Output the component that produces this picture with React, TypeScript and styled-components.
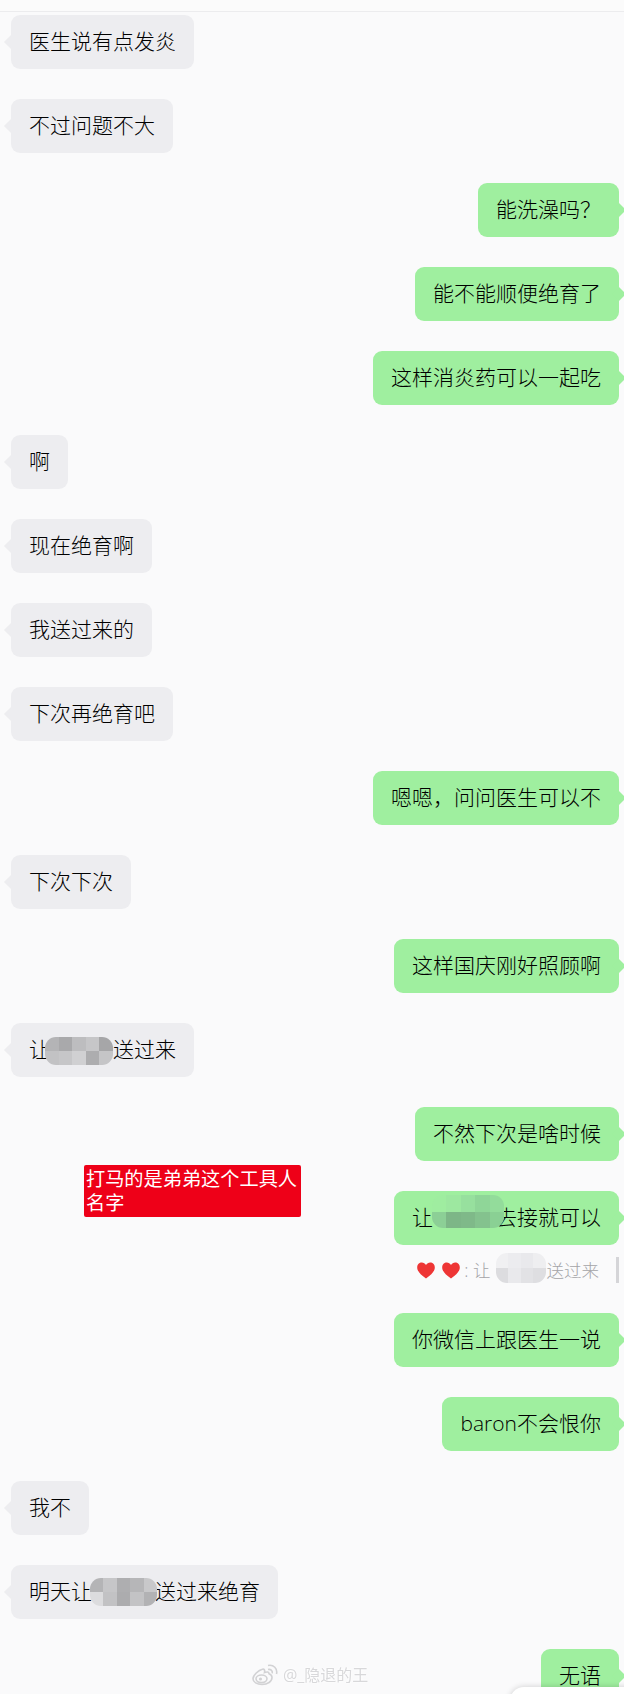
import React from 'react'
import styled, { createGlobalStyle } from 'styled-components'

const GlobalStyle = createGlobalStyle`
  html, body {
    margin: 0;
    padding: 0;
    background: #fafafb;
  }
  * {
    box-sizing: border-box;
  }
`

const Page = styled.div`
  position: relative;
  width: 624px;
  height: 1694px;
  overflow: hidden;
  background: #fafafb;
  font-family: "Open Sans", "Noto Sans CJK SC", sans-serif;
  font-weight: 300;
`

const TopBar = styled.div`
  height: 12px;
  background: #fbfbfb;
  border-bottom: 1px solid #ececee;
`

const Thread = styled.div`
  display: flex;
  flex-direction: column;
  gap: 30px;
  padding: 3px 5px 0 11px;
`

const Row = styled.div<{ $mine?: boolean }>`
  display: flex;
  flex-direction: column;
  align-items: ${({ $mine }) => ($mine ? 'flex-end' : 'flex-start')};
`

const Bubble = styled.div<{ $mine?: boolean }>`
  position: relative;
  height: 54px;
  padding: 0 18px;
  border-radius: 9px;
  background: ${({ $mine }) => ($mine ? '#9fef9f' : '#ededf0')};
  color: #000;
  font-size: 21px;
  line-height: 52px;
  white-space: nowrap;

  &::before {
    content: '';
    position: absolute;
    top: 22px;
    ${({ $mine }) => ($mine ? 'right: -5px;' : 'left: -5px;')}
    width: 10px;
    height: 10px;
    background: inherit;
    transform: rotate(45deg);
  }
`

const MaskSlot = styled.span<{ $w: number }>`
  position: relative;
  display: inline-block;
  width: ${({ $w }) => $w}px;
  height: 1em;
`

const MaskTiles = styled.span<{ $x: number; $y: number; $w: number; $h: number; $cols: number }>`
  position: absolute;
  left: ${({ $x }) => $x}px;
  top: ${({ $y }) => $y}px;
  width: ${({ $w }) => $w}px;
  height: ${({ $h }) => $h}px;
  display: grid;
  grid-template-columns: repeat(${({ $cols }) => $cols}, 1fr);
  border-radius: 11px;
  overflow: hidden;
  filter: blur(0.5px);
`

const Tile = styled.span<{ $c: string }>`
  background: ${({ $c }) => $c};
`

const Quote = styled.div`
  display: flex;
  align-items: center;
  height: 26px;
  margin: 12px 0 0;
  color: #a4a4a8;
  font-size: 17.5px;
  line-height: 26px;
  white-space: nowrap;
`

const QuoteBar = styled.span`
  width: 3px;
  height: 26px;
  margin-left: 17px;
  background: #d5d5d8;
`

const Hearts = styled.span`
  display: inline-flex;
  gap: 7px;
  margin-right: 4px;
`

const Note = styled.div`
  position: absolute;
  left: 84px;
  top: 1165px;
  width: 217px;
  height: 52px;
  padding: 2px 2px 0;
  border-radius: 2px;
  background: #ee0018;
  color: #fff;
  font-size: 19.2px;
  font-weight: 400;
  line-height: 24px;
`

const Watermark = styled.div`
  position: absolute;
  left: 252px;
  top: 1664px;
  display: flex;
  align-items: center;
  gap: 5px;
  color: #d8d8da;
  font-size: 16px;
  font-weight: 400;
  line-height: 22px;
  text-shadow: 0 0 2px #fff, 0 0 3px #fff;
  filter: blur(0.6px);
`

const CornerSheet = styled.div`
  position: absolute;
  left: 510px;
  top: 1687px;
  width: 140px;
  height: 40px;
  border-radius: 14px 0 0 0;
  background: #fff;
  box-shadow: 0 0 6px rgba(0, 0, 0, 0.18);
`

type Mask = {
  slot: number
  x: number
  y: number
  w: number
  h: number
  cols: number
  tiles: string[]
}

type Part = string | Mask

type Message = {
  mine?: boolean
  parts: Part[]
  quoted?: boolean
}

const nameMask = (slot: number, x: number, w: number, y: number, h: number, tiles: string[]): Mask => ({
  slot,
  x,
  y,
  w,
  h,
  cols: tiles.length / 2,
  tiles,
})

const messages: Message[] = [
  { parts: ['医生说有点发炎'] },
  { parts: ['不过问题不大'] },
  { mine: true, parts: ['能洗澡吗？'] },
  { mine: true, parts: ['能不能顺便绝育了'] },
  { mine: true, parts: ['这样消炎药可以一起吃'] },
  { parts: ['啊'] },
  { parts: ['现在绝育啊'] },
  { parts: ['我送过来的'] },
  { parts: ['下次再绝育吧'] },
  { mine: true, parts: ['嗯嗯，问问医生可以不'] },
  { parts: ['下次下次'] },
  { mine: true, parts: ['这样国庆刚好照顾啊'] },
  {
    parts: [
      '让',
      nameMask(63, -5, 68, 1, 28, [
        '#b4b4b6', '#a9a9ab', '#bdbdbf', '#c6c6c8', '#a6a6a8',
        '#c2c2c4', '#c6c6c8', '#d0d0d2', '#adadaf', '#c5c5c7',
      ]),
      '送过来',
    ],
  },
  { mine: true, parts: ['不然下次是啥时候'] },
  {
    mine: true,
    quoted: true,
    parts: [
      '让',
      nameMask(63, -1, 72, -9, 33, [
        '#9feda0', '#9de8a0', '#97e09e', '#8fd698', '#93dc9b',
        '#8ccf96', '#7db687', '#7fb989', '#84c28e', '#8ad094',
      ]),
      '去接就可以',
    ],
  },
  { mine: true, parts: ['你微信上跟医生一说'] },
  { mine: true, parts: ['baron不会恨你'] },
  { parts: ['我不'] },
  {
    parts: [
      '明天让',
      nameMask(63, -2, 67, 0, 28, [
        '#b4b4b6', '#c6c6c8', '#aeaeb0', '#b6b6b8', '#c8c8ca',
        '#dcdcde', '#c2c2c4', '#acacae', '#c3c3c5', '#b2b2b4',
      ]),
      '送过来绝育',
    ],
  },
  { mine: true, parts: ['无语'] },
]

const quoteMask = nameMask(56, 5, 50, -8, 30, [
  '#f0f0f2', '#ececef', '#e9e9ec', '#eeeef0',
  '#dcdcdf', '#e9e9ec', '#e2e2e5', '#dedee1',
])

const MaskedName = ({ mask }: { mask: Mask }) => (
  <MaskSlot $w={mask.slot}>
    <MaskTiles $x={mask.x} $y={mask.y} $w={mask.w} $h={mask.h} $cols={mask.cols}>
      {mask.tiles.map((c, i) => (
        <Tile key={i} $c={c} />
      ))}
    </MaskTiles>
  </MaskSlot>
)

const Heart = () => (
  <svg width="18" height="17" viewBox="0 0 18 17">
    <path
      d="M9 16.5C3.5 12.5 0.2 9.3 0.2 5.4 0.2 2.6 2.3 0.6 4.8 0.6 6.5 0.6 8.1 1.5 9 3 9.900 1.500 11.500 0.600 13.200 0.600 15.700 0.600 17.800 2.600 17.800 5.400 17.800 9.300 14.500 12.500 9 16.500Z"
      fill="#ee3535"
    />
  </svg>
)

const WeiboLogo = () => (
  <svg width="26" height="22" viewBox="0 0 26 22" fill="none" stroke="#d2d2d4" strokeWidth="1.6">
    <path d="M10 20.500C5 20.500 1 18.200 1 14.800 1 11.400 6.500 6 10.500 5.200 12.500 4.900 13 6.500 12.500 8.500 15 7.500 17 7.800 17 9.800 19 10.500 20 11.800 20 13.500 20 17.500 15.500 20.500 10 20.500Z" fill="#fafafb" />
    <ellipse cx="9.500" cy="14.800" rx="5.500" ry="3.800" />
    <circle cx="8.500" cy="15" r="1.600" fill="#d2d2d4" stroke="none" />
    <path d="M16 5.500C18.500 4.800 20.800 6.800 20.300 9.300" />
    <path d="M16 1.500C21.500 0.300 25.800 4.500 24.500 10" />
  </svg>
)

const App = () => {
  return (
    <Page>
      <GlobalStyle />
      <TopBar />
      <Thread>
        {messages.map((message, i) => (
          <Row key={i} $mine={message.mine}>
            <Bubble $mine={message.mine}>
              {message.parts.map((part, j) =>
                typeof part === 'string' ? part : <MaskedName key={j} mask={part} />,
              )}
            </Bubble>
            {message.quoted && (
              <Quote>
                <Hearts>
                  <Heart />
                  <Heart />
                </Hearts>
                : 让
                <MaskedName mask={quoteMask} />
                送过来
                <QuoteBar />
              </Quote>
            )}
          </Row>
        ))}
      </Thread>
      <Note>打马的是弟弟这个工具人名字</Note>
      <Watermark>
        <WeiboLogo />
        @_隐退的王
      </Watermark>
      <CornerSheet />
    </Page>
  )
}

export default App
